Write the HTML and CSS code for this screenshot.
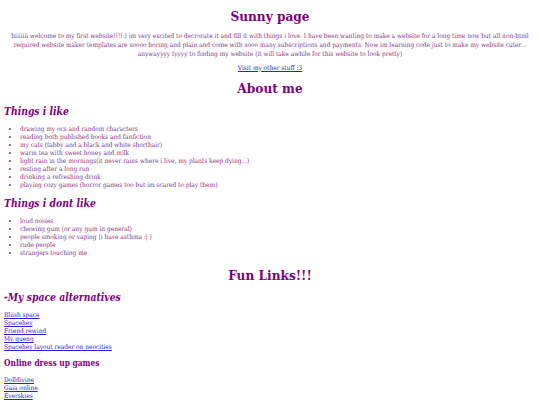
FILE: index.html
```html
<!DOCTYPE html>
<html>
<head>
<meta charset="utf-8">
<title>Sunny page</title>
<link rel="stylesheet" href="styles.css">
</head>
<body>
<h1 class="title">Sunny page</h1>
<p class="intro">hiiiiiii welcome to my first website!!!!:) im very excited to decrorate it and fill it with things i love. I have been wanting to make a website for a long time now but all non-html required website maker templates are soooo boring and plain and come with sooo many subscriptions and payments. Now im learning code just to make my website cuter... anywayyyy tyyyy to finding my website (it will take awhile for this website to look pretty)</p>
<p class="visit"><a href="#">Visit my other stuff :3</a></p>
<h1 class="title">About me</h1>
<h2 class="sub">Things i like</h2>
<ul class="list">
<li>drawing my ocs and random characters</li>
<li>reading both published books and fanfiction</li>
<li>my cats (tabby and a black and white shorthair)</li>
<li>warm tea with sweet honey and milk</li>
<li>light rain in the mornings(it never rains where i live, my plants keep dying...)</li>
<li>resting after a long run</li>
<li>drinking a refreshing drink</li>
<li>playing cozy games (horror games too but im scared to play them)</li>
</ul>
<h2 class="sub">Things i dont like</h2>
<ul class="list">
<li>loud noises</li>
<li>chewing gum (or any gum in general)</li>
<li>people smoking or vaping (i have asthma :| )</li>
<li>rude people</li>
<li>strangers touching me</li>
</ul>
<h1 class="title fun">Fun Links!!!</h1>
<h2 class="sub">-My space alternatives</h2>
<div class="links">
<a href="#">Bliish space</a>
<a href="#">Spacehey</a>
<a href="#">Friend rewind</a>
<a href="#">My quenq</a>
<a href="#">Spacehey layout reader on neocities</a>
</div>
<h3 class="minor">Online dress up games</h3>
<div class="links">
<a href="#">Dolldivine</a>
<a href="#">Gaia online</a>
<a href="#">Everskies</a>
</div>
</body>
</html>
```
FILE: styles.css
```css
html, body {
  background: #ffffff;
}
body {
  margin: 0 4px;
  font-family: "DejaVu Serif Condensed", "DejaVu Serif", "Liberation Serif", serif;
  font-size: 6.5px;
  color: #883388;
  padding-top: 7px;
}
.title {
  font-size: 13.5px;
  line-height: 18px;
  font-weight: bold;
  color: #800080;
  text-align: center;
  margin: 0 0 6.5px;
}
.fun {
  margin-top: 9px;
}
.intro {
  text-align: center;
  line-height: 9px;
  margin: 0 0 5px;
}
.visit {
  text-align: center;
  line-height: 9px;
  margin: 0 0 6.5px;
}
a {
  color: #2222dd;
}
.sub {
  font-size: 10.3px;
  line-height: 14px;
  font-style: italic;
  font-weight: bold;
  color: #800080;
  margin: 0 0 7px;
}
.minor {
  font-size: 8.3px;
  line-height: 11px;
  font-weight: bold;
  color: #800080;
  margin: 7px 0 7px;
}
.list {
  margin: 0 0 7px;
  padding-left: 16px;
  line-height: 8px;
}
.links {
  display: flex;
  flex-direction: column;
  align-items: flex-start;
  line-height: 8px;
}
```
